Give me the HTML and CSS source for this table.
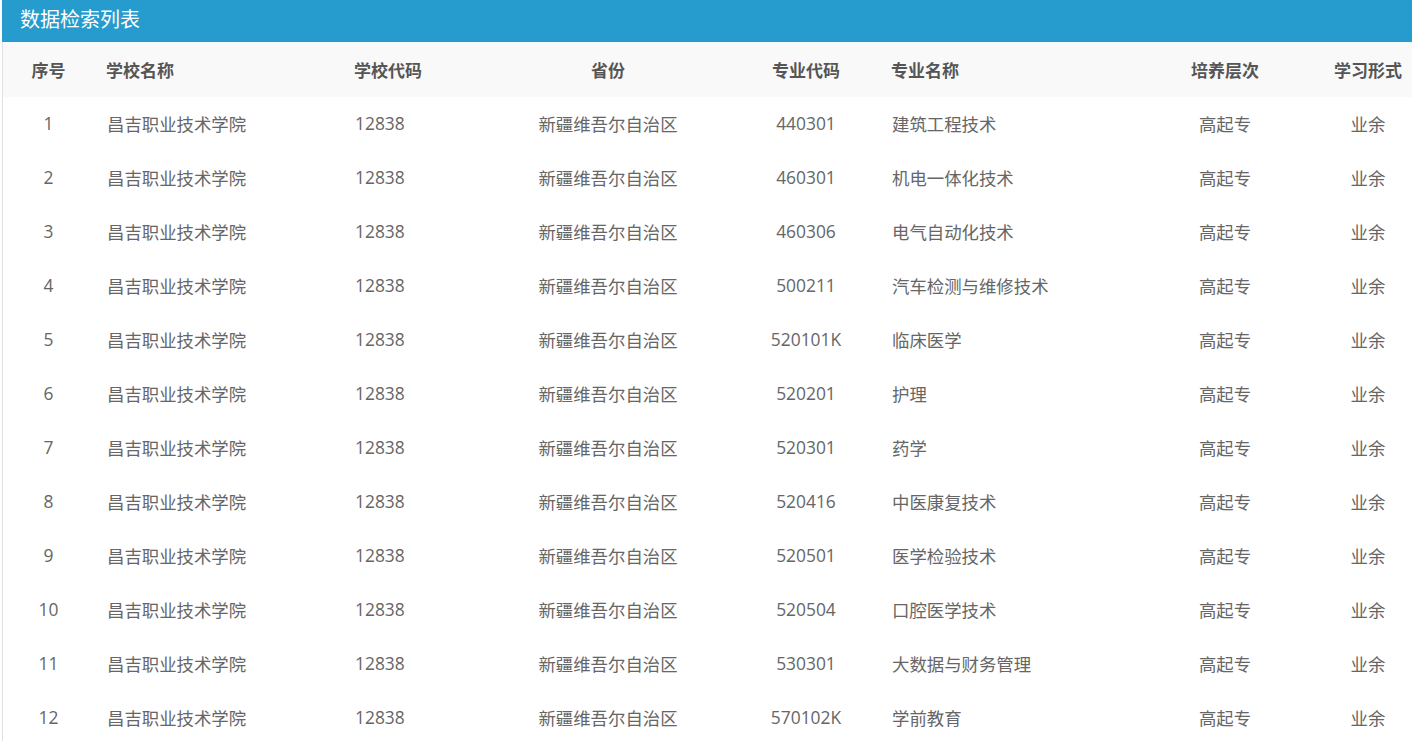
FILE: index.html
```html
<!DOCTYPE html>
<html lang="zh">
<head>
<meta charset="utf-8">
<title>数据检索列表</title>
<link rel="stylesheet" href="styles.css">
</head>
<body>
<div class="panel">
  <div class="panel-title">数据检索列表</div>
  <table class="grid">
    <colgroup>
      <col class="c1"><col class="c2"><col class="c3"><col class="c4"><col class="c5"><col class="c6"><col class="c7"><col class="c8">
    </colgroup>
    <thead>
      <tr><th class="ctr">序号</th><th class="lft">学校名称</th><th class="lft">学校代码</th><th class="ctr">省份</th><th class="ctr">专业代码</th><th class="lft">专业名称</th><th class="ctr">培养层次</th><th class="ctr">学习形式</th></tr>
    </thead>
    <tbody>
      <tr><td class="ctr">1</td><td class="lft">昌吉职业技术学院</td><td class="lft">12838</td><td class="ctr">新疆维吾尔自治区</td><td class="ctr">440301</td><td class="lft">建筑工程技术</td><td class="ctr">高起专</td><td class="ctr">业余</td></tr>
      <tr><td class="ctr">2</td><td class="lft">昌吉职业技术学院</td><td class="lft">12838</td><td class="ctr">新疆维吾尔自治区</td><td class="ctr">460301</td><td class="lft">机电一体化技术</td><td class="ctr">高起专</td><td class="ctr">业余</td></tr>
      <tr><td class="ctr">3</td><td class="lft">昌吉职业技术学院</td><td class="lft">12838</td><td class="ctr">新疆维吾尔自治区</td><td class="ctr">460306</td><td class="lft">电气自动化技术</td><td class="ctr">高起专</td><td class="ctr">业余</td></tr>
      <tr><td class="ctr">4</td><td class="lft">昌吉职业技术学院</td><td class="lft">12838</td><td class="ctr">新疆维吾尔自治区</td><td class="ctr">500211</td><td class="lft">汽车检测与维修技术</td><td class="ctr">高起专</td><td class="ctr">业余</td></tr>
      <tr><td class="ctr">5</td><td class="lft">昌吉职业技术学院</td><td class="lft">12838</td><td class="ctr">新疆维吾尔自治区</td><td class="ctr">520101K</td><td class="lft">临床医学</td><td class="ctr">高起专</td><td class="ctr">业余</td></tr>
      <tr><td class="ctr">6</td><td class="lft">昌吉职业技术学院</td><td class="lft">12838</td><td class="ctr">新疆维吾尔自治区</td><td class="ctr">520201</td><td class="lft">护理</td><td class="ctr">高起专</td><td class="ctr">业余</td></tr>
      <tr><td class="ctr">7</td><td class="lft">昌吉职业技术学院</td><td class="lft">12838</td><td class="ctr">新疆维吾尔自治区</td><td class="ctr">520301</td><td class="lft">药学</td><td class="ctr">高起专</td><td class="ctr">业余</td></tr>
      <tr><td class="ctr">8</td><td class="lft">昌吉职业技术学院</td><td class="lft">12838</td><td class="ctr">新疆维吾尔自治区</td><td class="ctr">520416</td><td class="lft">中医康复技术</td><td class="ctr">高起专</td><td class="ctr">业余</td></tr>
      <tr><td class="ctr">9</td><td class="lft">昌吉职业技术学院</td><td class="lft">12838</td><td class="ctr">新疆维吾尔自治区</td><td class="ctr">520501</td><td class="lft">医学检验技术</td><td class="ctr">高起专</td><td class="ctr">业余</td></tr>
      <tr><td class="ctr">10</td><td class="lft">昌吉职业技术学院</td><td class="lft">12838</td><td class="ctr">新疆维吾尔自治区</td><td class="ctr">520504</td><td class="lft">口腔医学技术</td><td class="ctr">高起专</td><td class="ctr">业余</td></tr>
      <tr><td class="ctr">11</td><td class="lft">昌吉职业技术学院</td><td class="lft">12838</td><td class="ctr">新疆维吾尔自治区</td><td class="ctr">530301</td><td class="lft">大数据与财务管理</td><td class="ctr">高起专</td><td class="ctr">业余</td></tr>
      <tr><td class="ctr">12</td><td class="lft">昌吉职业技术学院</td><td class="lft">12838</td><td class="ctr">新疆维吾尔自治区</td><td class="ctr">570102K</td><td class="lft">学前教育</td><td class="ctr">高起专</td><td class="ctr">业余</td></tr>
    </tbody>
  </table>
</div>
</body>
</html>
```
FILE: styles.css
```css
html, body {
  margin: 0;
  padding: 0;
  overflow: hidden;
  background: #fff;
}
body {
  font-family: "Noto Sans CJK SC", "Noto Sans", sans-serif;
  padding-left: 2px;
}
.panel {
  width: 1429px;
  border-left: 1px solid #e2e2e2;
}
.panel-title {
  height: 42px;
  line-height: 38px;
  background: #269bcd;
  color: #fff;
  font-size: 20px;
  padding-left: 18px;
  margin-left: -1px;
}
.grid {
  border-collapse: collapse;
  table-layout: fixed;
  width: 1428px;
  font-size: 17.4px;
}
.c1 { width: 91px; }
.c2 { width: 248px; }
.c3 { width: 141px; }
.c4 { width: 250px; }
.c5 { width: 146px; }
.c6 { width: 266px; }
.c7 { width: 160px; }
.c8 { width: 126px; }
.grid thead tr {
  background: #f9f9f9;
  height: 55px;
}
.grid th {
  font-weight: bold;
  color: #555;
  padding: 0;
  font-size: 17px;
}
.grid th.lft { padding-left: 12px !important; }
.grid tbody tr {
  height: 54px;
}
.grid td {
  color: #666;
  padding: 0 0 2px 0;
  font-family: "Open Sans", "Noto Sans CJK SC", sans-serif;
}
.ctr { text-align: center; }
.lft { text-align: left; padding-left: 13px !important; }
```
